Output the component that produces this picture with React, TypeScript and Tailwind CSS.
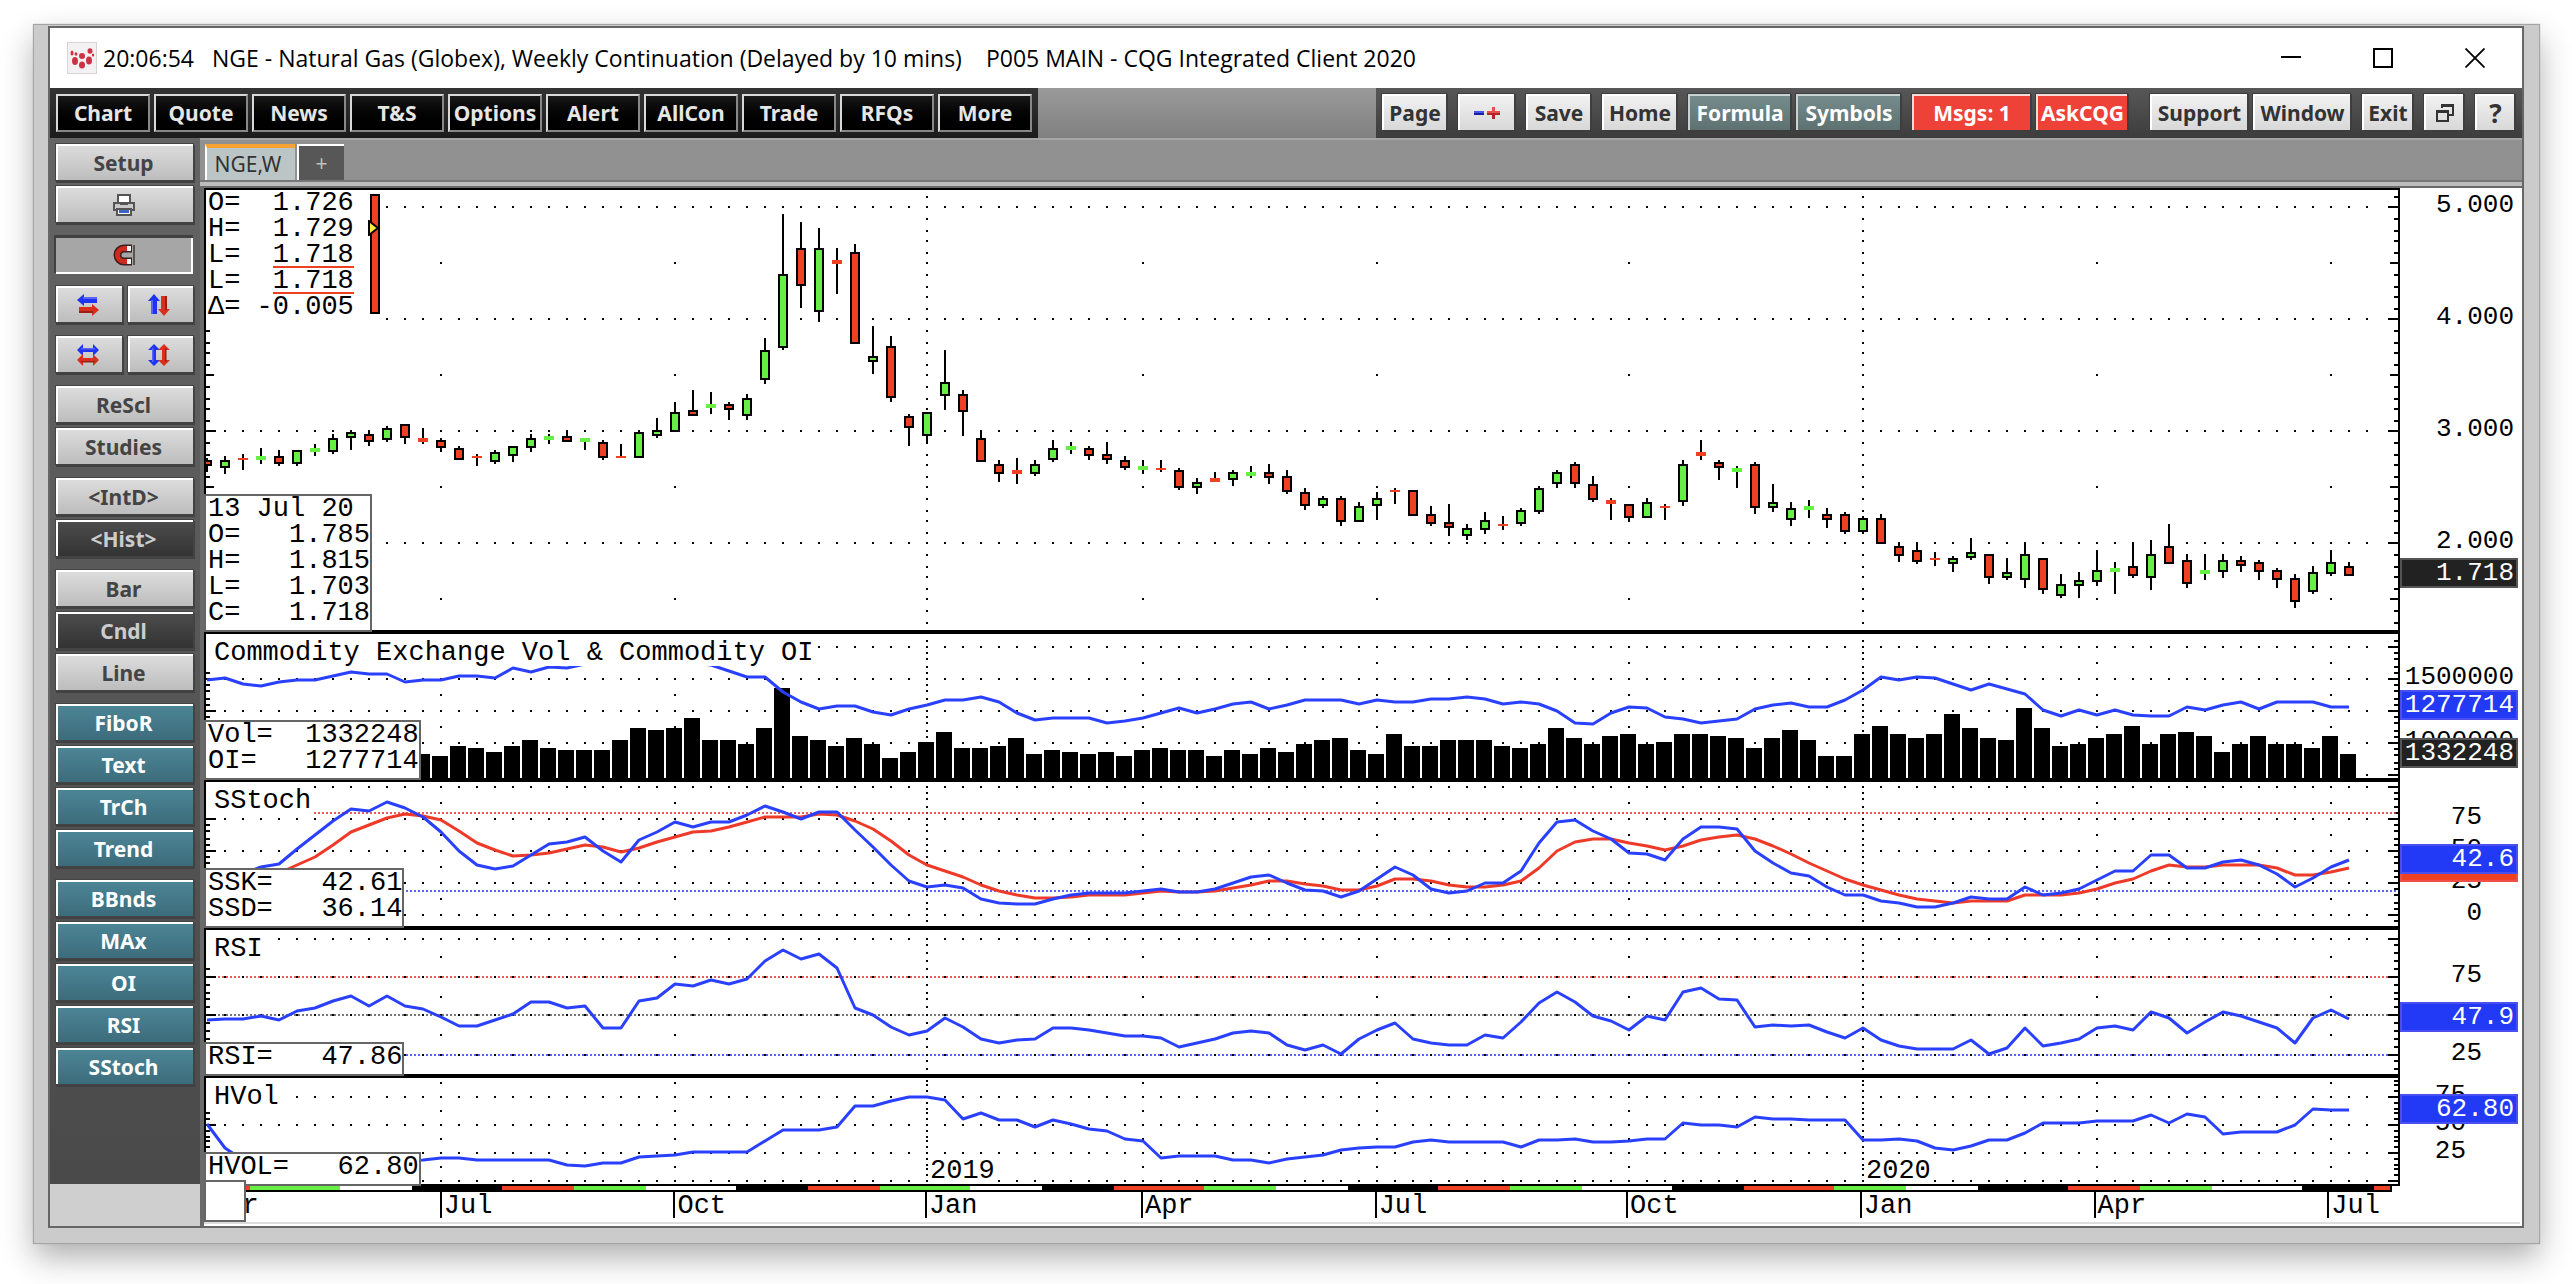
import type { ReactNode } from "react";

/* ---------- data, one entry per week ---------- */

const STEP = 18;
const FIRST = 207;
const X0 = 206;
const X1 = 2398;
const xAt = (i: number) => FIRST + STEP * i;

// high, body top, body bottom, low, direction (plot y units)
const CANDLES = `458,460,466,472,r 456,460,468,474,g 454,458,460,470,r 448,456,460,464,g 450,456,464,466,r 450,450,464,466,g
444,448,452,456,g 434,438,452,454,g 430,432,438,450,g 430,434,442,446,r 426,428,440,442,g 424,424,438,444,r
428,438,442,444,r 438,440,448,452,r 446,448,460,460,r 454,456,458,466,r 450,452,462,464,g 446,446,456,462,g
434,438,448,452,g 434,436,440,444,g 430,436,442,442,r 438,438,442,450,g 440,442,458,460,r 444,456,458,458,r
430,432,458,458,g 418,430,436,438,g 402,412,432,432,g 390,410,416,416,r 392,404,408,414,g 402,404,410,420,r
394,398,416,420,g 338,350,380,384,g 214,274,348,350,g 222,248,286,308,r 228,248,312,322,g 248,260,264,294,r
244,252,344,344,r 326,356,362,374,g 336,346,398,402,r 414,416,428,446,r 412,412,436,444,g 350,382,396,410,g
390,394,412,436,r 430,438,462,462,r 460,464,474,482,r 458,470,474,484,r 460,464,474,476,g 440,448,460,462,g
442,446,450,454,g 446,448,456,460,r 442,454,460,464,r 456,460,468,470,r 460,466,470,474,g 460,468,470,472,r
468,470,488,490,r 478,482,488,494,g 472,478,482,482,r 470,472,480,486,g 466,472,476,478,g 464,472,478,484,r
470,476,492,494,r 488,492,506,510,r 496,498,506,508,g 496,498,522,526,r 502,506,522,522,g 492,498,506,520,g
488,490,492,504,r 490,490,516,516,r 506,514,524,526,r 504,522,528,536,r 524,528,536,540,g 512,520,530,534,g
516,524,526,530,r 508,510,524,526,g 486,488,512,514,g 470,472,484,488,g 462,464,484,488,r 476,484,500,502,r
498,500,504,520,r 504,504,518,522,r 498,502,518,518,g 504,506,508,520,r 460,464,502,506,g 440,452,456,460,r
460,462,468,480,r 466,468,472,488,g 462,464,508,514,r 484,502,508,512,g 502,508,520,526,g 500,506,510,518,g
508,514,520,528,r 512,514,532,534,r 516,518,532,532,g 514,518,544,544,r 542,546,556,562,r 542,550,562,564,r
552,558,560,566,r 556,558,564,572,g 538,552,558,560,g 554,554,578,584,r 558,572,578,580,g 542,554,580,588,g
558,558,590,594,r 574,584,596,598,g 572,580,586,598,g 550,570,582,586,g 562,568,572,594,g 542,566,576,578,r
540,554,578,590,g 524,546,564,564,r 554,560,584,588,r 554,570,574,580,g 554,560,572,578,g 556,560,566,572,r
560,562,572,580,r 568,570,580,588,r 574,578,602,608,r 566,572,592,594,g 550,562,574,576,g 562,566,576,576,r`
  .split(/\s+/)
  .map((row) => {
    const [h, t, b, l, d] = row.split(",");
    return { high: +h, top: +t, bottom: +b, low: +l, up: d === "g" };
  });

const nums = (s: string) => s.trim().split(/\s+/).map(Number);

const VOLUME = nums(`756 754 752 756 754 750 752 748 752 754 750 752
754 756 746 748 752 746 740 748 750 750 750 740 728 730 728 718 740 740 744 728 688 736 740 746 738 744 758 752
742 732 748 748 746 738 754 750 752 754 752 756 750 748 750 750 756 750 754 748 752 744 740 738 750 754 734 746 746 740
740 740 746 748 744 728 738 744 736 734 744 742 734 734 736 738 748 738 730 740 756 756 734 726 734 738 734 714 728 738
740 708 728 746 744 738 734 726 744 734 732 736 752 744 736 744 744 748 736 754`);

const OPEN_INTEREST = nums(`680 678 684 686 682 680 680 676 672 674 674 682 680 680 676 676 678 668 672 667
668 664 662 660 660 661 662 663 665 671 677 677 692 702 709 706 706 712 715 709
705 700 700 697 702 713 720 718 718 718 723 721 718 713 708 713 709 704 702 709 705 700 700 700 704 700 702 702 699 699
697 699 704 702 704 711 723 724 713 707 708 717 719 723 721 719 709 705 703 707 707 700 690 677 680 677 678 684 690 684
689 694 710 716 710 715 710 715 716 716 707 710 705 702 709 702 702 702 707 707`);

const SSK = nums(`880 878 874 867 864 849 835 821 809 811 802 808 817 832 851 865 869 866 855 844 842 837 851 862 840 832 822 827 822 822
815 806 812 819 812 812 830 847 865 881 887 885 888 899 903 904 904 899 895 893 893 893 891 889 892 892 889 883 877 875
883 890 891 897 891 879 867 875 889 893 891 883 883 871 843 822 820 831 839 853 854 860 839 827 827 829 851 863 873 876
887 895 895 901 903 907 907 903 897 899 899 887 895 893 889 880 871 871 855 855 868 868 862 860 865 874 887 878 867 860`);

const SSD = nums(`884 882 880 876 873 865 857 845 832 825 818 814 816 820 831 843 850 856 855 853 849 845 847 852 848 842 837 832 831 827
822 817 817 817 814 815 821 829 841 855 865 871 877 885 891 895 898 898 897 895 895 895 893 891 892 892 891 888 885 881
881 884 886 890 890 886 879 879 881 885 887 887 885 881 868 851 842 839 839 843 846 850 846 840 837 835 839 846 854 863
871 879 885 890 895 899 901 903 901 901 901 895 895 895 893 889 883 879 871 865 867 867 865 865 865 868 875 875 872 868`);

const RSI = nums(`1020 1019 1019 1016 1020 1011 1008 1001 996 1006 996 1006 1009 1017 1026 1026 1020 1014 1002 1002 1008 1006 1028 1028 1001 998 984 986 980 984
979 961 950 959 954 968 1008 1015 1027 1035 1031 1018 1027 1039 1043 1040 1039 1028 1028 1030 1033 1036 1036 1038 1047 1043 1039 1033 1031 1033
1045 1050 1045 1054 1039 1030 1023 1039 1043 1045 1045 1035 1038 1022 1003 992 1002 1016 1021 1030 1016 1020 992 988 999 1000 1027 1025 1026 1025
1032 1038 1028 1040 1046 1049 1049 1049 1040 1054 1048 1028 1046 1043 1039 1028 1026 1030 1012 1018 1033 1022 1012 1016 1022 1028 1043 1018 1010 1019`);

const HVOL = nums(`1124 1148 1160 1164 1164 1164 1164 1163 1162 1162 1161 1161 1160 1158 1158 1160 1160 1160 1160 1160 1165 1166 1163 1163 1157 1156 1155 1152 1152 1152
1152 1141 1130 1130 1130 1127 1106 1106 1101 1097 1097 1100 1119 1113 1120 1120 1127 1120 1124 1129 1131 1139 1141 1158 1156 1156 1156 1160 1160 1163
1159 1157 1155 1150 1148 1147 1147 1142 1140 1142 1142 1142 1142 1147 1140 1140 1139 1142 1142 1141 1139 1139 1123 1125 1125 1127 1117 1119 1119 1120
1120 1120 1140 1140 1139 1141 1148 1150 1146 1140 1140 1133 1123 1123 1123 1121 1121 1121 1115 1123 1114 1117 1134 1132 1132 1132 1125 1109 1110 1110`);

const QUARTERS = [13, 26, 52, 65, 79, 105, 118];
const YEARS = [40, 92];

const MONTHS: [string, string][] = [
  ["Apr", "grow-[234] border-white"],
  ["Jul", "grow-[234] border-black"],
  ["Oct", "grow-[252] border-black"],
  ["Jan", "grow-[216] border-black"],
  ["Apr", "grow-[234] border-black"],
  ["Jul", "grow-[252] border-black"],
  ["Oct", "grow-[234] border-black"],
  ["Jan", "grow-[234] border-black"],
  ["Apr", "grow-[234] border-black"],
  ["Jul", "grow-[70] border-black"],
];

const STRIP_STOPS = [
  206, 250, 340, 412, 502, 574, 646, 736, 808, 880, 970, 1042, 1114, 1204, 1276, 1348, 1438, 1510, 1582, 1672, 1744,
  1834, 1906, 1978, 2068, 2140, 2212, 2302, 2374, 2390,
];
const STRIP_COLOURS = ["#ee4023", "#66f043", "#ffffff", "#000000"];

/* ---------- chart primitives ---------- */

type Scale = {
  top: number;
  height: number;
  grid: [y: number, fromWeek: number][];
  mids: number[];
  minor: number[];
  leftFrom: number;
};

function Grid({ s }: { s: Scale }) {
  const dots: ReactNode[] = [];
  const dot = (x: number, y: number) => dots.push(<rect key={`${x}-${y}`} x={x - 1} y={y - 1} width="2" height="2" />);
  s.grid.forEach(([y, from]) => {
    for (let i = from; i <= 120; i++) dot(xAt(i), y);
  });
  s.mids.forEach((y) => QUARTERS.forEach((q) => dot(xAt(q), y)));
  const major = s.grid.map((g) => g[0]);
  s.minor.forEach((y) => YEARS.forEach((w) => !major.includes(y) && dot(xAt(w), y)));
  return (
    <g fill="#000">
      {dots}
      {s.minor.map((y) => {
        const len = major.includes(y) ? 10 : s.mids.includes(y) && s.height > 200 ? 8 : 4;
        return (
          <g key={y}>
            <rect x={X1 - len} y={y - 1} width={len} height="2" />
            {y >= s.leftFrom && <rect x={X0} y={y - 1} width={len} height="2" />}
          </g>
        );
      })}
    </g>
  );
}

function Line({ data, colour }: { data: number[]; colour: string }) {
  return (
    <polyline
      points={data.map((y, i) => `${xAt(i)},${y}`).join(" ")}
      fill="none"
      stroke={colour}
      strokeWidth="3"
      shapeRendering="auto"
      strokeLinejoin="round"
    />
  );
}

function Level({ y, colour, from = X0 }: { y: number; colour: string; from?: number }) {
  return <line x1={from} x2={X1} y1={y} y2={y} stroke={colour} strokeWidth="2" strokeDasharray="2 2" opacity="0.8" />;
}

function Candles() {
  return (
    <g>
      {CANDLES.map((c, i) => {
        const x = xAt(i);
        const fill = c.up ? "#66f043" : "#ee4023";
        const h = c.bottom - c.top;
        return (
          <g key={i}>
            <rect x={x - 1} y={c.high} width="2" height={c.low - c.high} fill="#000" />
            {h > 4 && <rect x={x - 5} y={c.top} width="10" height={h} fill="#000" />}
            {h > 4 ? (
              <rect x={x - 3} y={c.top + 2} width="6" height={h - 4} fill={fill} />
            ) : (
              <rect x={x - 5} y={c.top} width="10" height={h} fill={fill} />
            )}
          </g>
        );
      })}
    </g>
  );
}

const ticks = (origin: number, step: number, from: number, to: number, snap: (n: number) => number) => {
  const out: number[] = [];
  for (let k = from; k <= to; k++) out.push(origin + 2 * snap((step * k) / 100));
  return out;
};

const PRICE: Scale = {
  top: 190,
  height: 440,
  grid: [[207, 10], [319, 10], [431, 1], [543, 1]],
  mids: [263, 375, 487, 599],
  minor: ticks(207, 560, -1, 37, Math.ceil),
  leftFrom: 325,
};
const VOL: Scale = {
  top: 634,
  height: 144,
  grid: [[647, 34], [679, 0], [711, 0], [743, 0], [775, 0]],
  mids: [663, 695, 727],
  minor: ticks(647, 320, -1, 20, Math.round),
  leftFrom: 672,
};
const STOCH: Scale = {
  top: 782,
  height: 144,
  grid: [[787, 6], [819, 0], [851, 0], [883, 0], [915, 0]],
  mids: [803, 835, 867, 899],
  minor: ticks(787, 320, 0, 21, Math.round),
  leftFrom: 814,
};
const RSI_SCALE: Scale = {
  top: 930,
  height: 144,
  grid: [[939, 4], [977, 0], [1015, 0], [1055, 0]],
  mids: [957, 997, 1035],
  minor: ticks(939, 387, 0, 17, Math.floor),
  leftFrom: 968,
};
const HVOL_SCALE: Scale = {
  top: 1078,
  height: 106,
  grid: [[1097, 5], [1125, 0], [1153, 0], [1181, 0]],
  mids: [1083, 1111, 1139, 1167],
  minor: ticks(1097, 280, -3, 15, Math.round),
  leftFrom: 1112,
};

/* ---------- panes ---------- */

function Pane({
  scale,
  size,
  edge,
  label,
  drawing,
  children,
  axis,
}: {
  scale: Scale;
  size: string;
  edge: string;
  label: string;
  drawing: ReactNode;
  children?: ReactNode;
  axis: ReactNode;
}) {
  return (
    <section className="flex" aria-label={label}>
      <div className={`relative min-w-0 flex-1 border-x-2 border-black ${edge}`}>
        <svg
          className={`block w-full ${size}`}
          viewBox={`${X0} ${scale.top} ${X1 - X0} ${scale.height}`}
          preserveAspectRatio="none"
          shapeRendering="crispEdges"
          aria-hidden="true"
        >
          {drawing}
        </svg>
        {children}
      </div>
      <div className="relative w-[122px] shrink-0 text-[26px]">{axis}</div>
    </section>
  );
}

function Title({ children }: { children: ReactNode }) {
  return <h2 className="absolute left-0 top-0 bg-white pl-2 pt-1.5 leading-[26px]">{children}</h2>;
}

function Readout({ rows }: { rows: string[] }) {
  return (
    <div className="absolute -bottom-0.5 -left-0.5 border-2 border-[#666] bg-white pb-1 pl-0.5 leading-[26px]">
      {rows.map((r) => (
        <p key={r} className="h-[26px] whitespace-pre">
          {r}
        </p>
      ))}
    </div>
  );
}

function AxisLabels({ labels, className, row }: { labels: string[]; className: string; row: string }) {
  return (
    <div className={`absolute inset-x-0 top-0 text-right leading-[26px] ${className}`}>
      {labels.map((l) => (
        <p key={l} className={row}>
          {l}
        </p>
      ))}
    </div>
  );
}

function Badge({ tone, at, children }: { tone: string; at: string; children?: ReactNode }) {
  return (
    <p className={`absolute left-0 right-1 h-[30px] border-2 pr-0.5 text-right leading-[26px] text-white ${tone} ${at}`}>
      {children}
    </p>
  );
}

const BLUE = "border-[#4a50f0] bg-[#2239f5]";
const DARK = "border-[#555] bg-[#222]";

/* ---------- chrome ---------- */

function Logo() {
  return (
    <svg className="h-8 w-[30px]" viewBox="0 0 30 32" aria-hidden="true">
      <rect x="0.5" y="0.5" width="29" height="31" fill="#f3f1f2" stroke="#d8d4d6" />
      <g fill="#cc3344">
        <ellipse cx="5" cy="11" rx="1.500" ry="2.500" />
        <ellipse cx="8" cy="19" rx="3" ry="4" />
        <ellipse cx="15" cy="14" rx="3" ry="3" />
        <ellipse cx="15" cy="23" rx="3" ry="3.500" />
        <ellipse cx="22" cy="18.500" rx="3" ry="4" />
        <ellipse cx="23" cy="9" rx="2.500" ry="2.800" />
        <ellipse cx="9" cy="12" rx="1.500" ry="1.800" />
        <ellipse cx="26" cy="13" rx="1.200" ry="1.600" />
      </g>
    </svg>
  );
}

const MENU = ["Chart", "Quote", "News", "T&S", "Options", "Alert", "AllCon", "Trade", "RFQs", "More"];

const LIGHT_BTN = "border-white bg-linear-to-b from-[#f1f1f1] to-[#d8d8d8] text-[#333]";
const TEAL_BTN = "border-[#c9d3d3] bg-linear-to-b from-[#768c8c] to-[#5d7171] text-white";
const RED_BTN = "border-[#f6dada] bg-[#ee4138] text-white";

const TOOLS: { label: string; content: ReactNode; look: string }[] = [
  { label: "Page", content: "Page", look: `w-[64px] mr-3 ${LIGHT_BTN}` },
  {
    label: "Zoom out or in",
    content: (
      <svg className="h-5 w-7" viewBox="0 0 28 20" aria-hidden="true">
        <path d="M1 8h10v2H1z" fill="#4a50f0" />
        <path d="M1 10h10v2H1z" fill="#1520a8" />
        <path d="M14 8h5V4h3v4h5v2H14z" fill="#e8504c" />
        <path d="M14 10h13v2h-5v4h-3v-4h-5z" fill="#b02622" />
      </svg>
    ),
    look: `w-[56px] mr-3 ${LIGHT_BTN}`,
  },
  { label: "Save", content: "Save", look: `w-[64px] mr-3 ${LIGHT_BTN}` },
  { label: "Home", content: "Home", look: `w-[74px] mr-3 ${LIGHT_BTN}` },
  { label: "Formula", content: "Formula", look: `w-[102px] mr-1.5 ${TEAL_BTN}` },
  { label: "Symbols", content: "Symbols", look: `w-[104px] mr-3 ${TEAL_BTN}` },
  { label: "Messages", content: "Msgs: 1", look: `w-[118px] mr-1.5 ${RED_BTN}` },
  { label: "AskCQG", content: "AskCQG", look: `w-[91px] mr-[23px] ${RED_BTN}` },
  { label: "Support", content: "Support", look: `w-[97px] mr-1.5 ${LIGHT_BTN}` },
  { label: "Window", content: "Window", look: `w-[97px] mr-3 ${LIGHT_BTN}` },
  { label: "Exit", content: "Exit", look: `w-[50px] mr-3 ${LIGHT_BTN}` },
  {
    label: "Restore window",
    content: (
      <svg className="h-5 w-5" viewBox="0 0 20 20" fill="none" stroke="#333" aria-hidden="true">
        <path d="M7 5V2h11v10h-4" strokeWidth="2" />
        <path d="M6 2.500h13" strokeWidth="3" />
        <path d="M2 8h11v10H2z" strokeWidth="2" />
        <path d="M1 8.500h13" strokeWidth="3" />
      </svg>
    ),
    look: `w-[39px] mr-3 ${LIGHT_BTN}`,
  },
  { label: "Help", content: <span className="text-[26px]">?</span>, look: `w-[39px] mr-2 ${LIGHT_BTN}` },
];

function SwapIcon({ vertical, both }: { vertical?: boolean; both?: boolean }) {
  return (
    <svg className="h-[22px] w-[22px]" viewBox="0 0 22 22" aria-hidden="true">
      <g transform={vertical ? "matrix(0 1 1 0 0 0)" : undefined}>
        <path d={both ? "M0 6l6-6v4h10V0l6 6-6 6V8H6v4z" : "M0 6l7-6v3h13v6H7v3z"} fill="#1d35f2" />
        <path d={both ? "M0 16l6-6v4h10v-4l6 6-6 6v-4H6v4z" : "M22 16l-7-6v3H2v6h13v3z"} fill="#d92f1c" />
        <path d={both ? "M4 4h14v1.500H4z" : "M6 3h14v2H6z"} fill="#5a62fa" />
        <path d={both ? "M4 17h14v1.500H4z" : "M2 17h14v2H2z"} fill="#9c2012" />
      </g>
    </svg>
  );
}

const PrinterIcon = (
  <svg className="h-[22px] w-[24px]" viewBox="0 0 24 22" aria-hidden="true">
    <path d="M6 1h12v8H6z" fill="#fff" stroke="#555" strokeWidth="2" />
    <path d="M2 9h20v7H2z" fill="#c9c9c9" stroke="#555" strokeWidth="2" />
    <path d="M8 10h8" stroke="#555" strokeWidth="2" />
    <path d="M5 15h14v6H5z" fill="#f4f6fb" stroke="#555" strokeWidth="2" />
    <path d="M7 16h10v3H7z" fill="#3d63c4" />
  </svg>
);

const MagnetIcon = (
  <svg className="h-[22px] w-[24px]" viewBox="0 0 24 22" fill="none" aria-hidden="true">
    <path d="M20 4.500h-8a6.500 6.500 0 0 0 0 13h8" stroke="#3a2020" strokeWidth="8" />
    <path d="M15 4.500h-3a6.500 6.500 0 0 0 0 13h3" stroke="#d2291f" strokeWidth="5" />
    <path d="M15 4.500h4M15 17.500h4" stroke="#f4f4f4" strokeWidth="5" />
    <path d="M22 1v20" stroke="#555" strokeWidth="2" />
  </svg>
);

const S_LIGHT = "border-white bg-linear-to-b from-[#dcdcdc] to-[#bdbdbd] text-[#444]";
const S_DARK = "border-white bg-linear-to-b from-[#4c4c4c] to-[#333] text-[#ccc]";
const S_TEAL = "border-white bg-linear-to-b from-[#4c8596] to-[#3c6c7b] text-white";

function SideButton({ look = S_LIGHT, label, children }: { look?: string; label?: string; children: ReactNode }) {
  return (
    <button
      type="button"
      aria-label={label}
      className={`flex h-9 w-full items-center justify-center border-l-2 border-t-2 pr-1 shadow-[0_0_0_1px_#444,1px_2px_0_1px_#414141] ${look}`}
    >
      {children}
    </button>
  );
}

const GROUPS: { look: string; labels: string[] }[] = [
  { look: S_LIGHT, labels: ["ReScl", "Studies"] },
  { look: S_LIGHT, labels: ["<IntD>", "<Hist>"] },
  { look: S_LIGHT, labels: ["Bar", "Cndl", "Line"] },
  { look: S_TEAL, labels: ["FiboR", "Text", "TrCh", "Trend"] },
  { look: S_TEAL, labels: ["BBnds", "MAx", "OI", "RSI", "SStoch"] },
];
const PRESSED = ["<Hist>", "Cndl"];

function Sidebar() {
  return (
    <aside className="flex w-[150px] shrink-0 flex-col bg-[#cfcfcf]">
      <nav className="flex flex-1 flex-col gap-3.5 bg-linear-to-b from-[#646464] to-[#4a4a4a] py-1.5 pl-1.5 pr-[7px] font-bold">
        <div className="flex flex-col gap-1.5">
          <SideButton>Setup</SideButton>
          <SideButton label="Print">{PrinterIcon}</SideButton>
        </div>
        <button
          type="button"
          aria-label="Magnet"
          aria-pressed="true"
          className="-mb-0.5 mt-0.5 flex h-9 w-full items-center justify-center border-b-2 border-r-2 border-white bg-[#a6a6a6] shadow-[-1px_-2px_0_1px_#414141]"
        >
          {MagnetIcon}
        </button>
        <div className="grid grid-cols-2 gap-x-1.5 gap-y-3.5">
          <SideButton label="Shift horizontally">
            <SwapIcon />
          </SideButton>
          <SideButton label="Shift vertically">
            <SwapIcon vertical />
          </SideButton>
          <SideButton label="Stretch horizontally">
            <SwapIcon both />
          </SideButton>
          <SideButton label="Stretch vertically">
            <SwapIcon both vertical />
          </SideButton>
        </div>
        {GROUPS.map((g) => (
          <div key={g.labels[0]} className="flex flex-col gap-1.5">
            {g.labels.map((l) => (
              <SideButton key={l} look={PRESSED.includes(l) ? S_DARK : g.look}>
                {l}
              </SideButton>
            ))}
          </div>
        ))}
      </nav>
      <div className="h-[42px]" />
    </aside>
  );
}

function Charts() {
  return (
    <div className="relative border-l-4 border-[#6a6a6a] bg-white font-['Liberation_Mono',monospace] text-[27px] text-black">
      <div className="mr-[122px] h-0.5 bg-black" />

      <Pane
        label="Price"
        scale={PRICE}
        size="h-[440px]"
        edge="border-b-4"
        drawing={
          <>
            <Grid s={PRICE} />
            <Candles />
          </>
        }
        axis={
          <>
            <AxisLabels labels={["5.000", "4.000", "3.000", "2.000"]} className="pr-2 pt-0.5" row="h-[112px]" />
            <Badge tone={DARK} at="top-[368px]">
              1.718
            </Badge>
          </>
        }
      >
        <div className="absolute left-0 top-0 flex h-[130px] gap-4 bg-white pl-0.5 leading-[26px]">
          <div className="whitespace-pre">
            <p className="h-[26px]">O=  1.726</p>
            <p className="h-[26px]">H=  1.729</p>
            <p className="flex h-[26px]">
              L=  <span className="border-b-2 border-[#ee4023]">1.718</span>
            </p>
            <p className="flex h-[26px]">
              L=  <span className="border-b-2 border-[#ee4023]">1.718</span>
            </p>
            <p className="h-[26px]">Δ= -0.005</p>
          </div>
          <div className="relative mt-1 h-[120px] w-2.5 border-2 border-black bg-[#ee4023]">
            <svg className="absolute -left-1 top-6 h-4 w-3" viewBox="0 0 12 16" aria-hidden="true">
              <path d="M1 1l9 7-9 7z" fill="#f7f13c" stroke="#000" strokeWidth="2" />
            </svg>
          </div>
        </div>
        <Readout rows={["13 Jul 20", "O=   1.785", "H=   1.815", "L=   1.703", "C=   1.718"]} />
      </Pane>

      <Pane
        label="Volume and open interest"
        scale={VOL}
        size="h-[144px]"
        edge="border-b-4"
        drawing={
          <>
            <Grid s={VOL} />
            {VOLUME.map((y, i) => (
              <rect key={i} x={xAt(i) - 9} y={y} width="16" height={778 - y} />
            ))}
            <Line data={OPEN_INTEREST} colour="#2a40ff" />
          </>
        }
        axis={
          <>
            <AxisLabels labels={["1500000", "1000000"]} className="pr-2 pt-[30px]" row="h-[64px]" />
            <Badge tone={BLUE} at="top-[56px]">
              1277714
            </Badge>
            <Badge tone={DARK} at="top-[104px]">
              1332248
            </Badge>
          </>
        }
      >
        <Title>Commodity Exchange Vol &amp; Commodity OI</Title>
        <Readout rows={["Vol=  1332248", "OI=   1277714"]} />
      </Pane>

      <Pane
        label="Slow stochastic"
        scale={STOCH}
        size="h-[144px]"
        edge="border-b-4"
        drawing={
          <>
            <Grid s={STOCH} />
            <Level y={813} colour="#e8322a" from={314} />
            <Level y={891} colour="#2a40ff" />
            <Line data={SSD} colour="#ee3a28" />
            <Line data={SSK} colour="#2a40ff" />
          </>
        }
        axis={
          <>
            <AxisLabels labels={["75", "50", "25", "0"]} className="pr-10 pt-[22px]" row="h-8" />
            <Badge tone="border-[#ee5048] bg-[#ee4023]" at="top-[70px]" />
            <Badge tone={BLUE} at="top-[62px]">
              42.6
            </Badge>
          </>
        }
      >
        <Title>SStoch</Title>
        <Readout rows={["SSK=   42.61", "SSD=   36.14"]} />
      </Pane>

      <Pane
        label="Relative strength index"
        scale={RSI_SCALE}
        size="h-[144px]"
        edge="border-b-4"
        drawing={
          <>
            <Level y={977} colour="#e8322a" />
            <Level y={1015} colour="#555" />
            <Level y={1055} colour="#2a40ff" />
            <Grid s={RSI_SCALE} />
            <Line data={RSI} colour="#2a40ff" />
          </>
        }
        axis={
          <>
            <AxisLabels labels={["75", "25"]} className="pr-10 pt-8" row="h-[78px]" />
            <Badge tone={BLUE} at="top-[72px]">
              47.9
            </Badge>
          </>
        }
      >
        <Title>RSI</Title>
        <Readout rows={["RSI=   47.86"]} />
      </Pane>

      <Pane
        label="Historical volatility"
        scale={HVOL_SCALE}
        size="h-[106px]"
        edge="border-b-2"
        drawing={
          <>
            <Grid s={HVOL_SCALE} />
            <Line data={HVOL} colour="#2a40ff" />
          </>
        }
        axis={
          <>
            <AxisLabels labels={["75", "50", "25"]} className="pr-14 pt-1" row="h-7" />
            <Badge tone={BLUE} at="top-4">
              62.80
            </Badge>
          </>
        }
      >
        <Title>HVol</Title>
        <Readout rows={["HVOL=   62.80"]} />
        <div className="absolute inset-x-0 bottom-0 flex leading-[26px]">
          <div className="grow-[720] basis-0" />
          <div className="grow-[936] basis-0">
            <p className="ml-1 w-fit bg-white">2019</p>
          </div>
          <div className="grow-[536] basis-0">
            <p className="ml-1 w-fit bg-white">2020</p>
          </div>
        </div>
      </Pane>

      <div className="mr-[130px] h-1.5 border-b-2 border-r-2 border-black">
        <svg className="block h-1 w-full" viewBox="204 0 2186 4" preserveAspectRatio="none" shapeRendering="crispEdges" aria-hidden="true">
          {STRIP_STOPS.slice(1).map((x, i) => (
            <rect key={x} x={STRIP_STOPS[i]} width={x - STRIP_STOPS[i]} height="4" fill={STRIP_COLOURS[i % 4]} />
          ))}
        </svg>
      </div>

      <div className="mr-[122px] flex h-[30px] pl-0.5 leading-[28px]">
        {MONTHS.map(([m, look], i) => (
          <p key={i} className={`h-[26px] basis-0 border-l-2 pl-0.5 ${look}`}>
            {m}
          </p>
        ))}
      </div>
      <div className="absolute bottom-1 left-0 h-[42px] w-[42px] border-2 border-[#666] bg-white" />
      <div className="mr-0.5 h-1 border-t-2 border-[#ddd]" />
    </div>
  );
}

export default function App() {
  return (
    <div className="min-h-screen bg-white pb-10 pl-[34px] pr-[33px] pt-[25px] font-['Noto_Sans',sans-serif] text-[21px] leading-6">
      <div className="border-b-[15px] border-l-[14px] border-r-[15px] border-t border-[#cbcbcb] shadow-[0_0_1px_1px_#a5a5a5,0_14px_30px_rgba(0,0,0,0.32)]">
        <main className="border-2 border-[#666] bg-white">
          <header className="flex h-[60px] items-center pl-[17px] pr-[37px] font-['Open_Sans',sans-serif] text-[23px] text-black">
            <Logo />
            <span className="ml-1.5 w-[109px]">20:06:54</span>
            <h1 className="flex flex-1 gap-6">
              <span>NGE - Natural Gas (Globex), Weekly Continuation (Delayed by 10 mins)</span>
              <span>P005 MAIN - CQG Integrated Client 2020</span>
            </h1>
            <div className="flex gap-[72px]">
              <button type="button" aria-label="Minimize">
                <svg className="block h-5 w-5" viewBox="0 0 20 20" aria-hidden="true">
                  <path d="M0 8h20v2H0z" />
                </svg>
              </button>
              <button type="button" aria-label="Maximize">
                <svg className="block h-5 w-5" viewBox="0 0 20 20" fill="none" stroke="#000" strokeWidth="2" aria-hidden="true">
                  <path d="M1 1h18v18H1z" />
                </svg>
              </button>
              <button type="button" aria-label="Close">
                <svg className="block h-5 w-5" viewBox="0 0 20 20" stroke="#000" strokeWidth="1.800" aria-hidden="true">
                  <path d="M0.500 0.500l19 19M19.500 0.500l-19 19" />
                </svg>
              </button>
            </div>
          </header>

          <div className="flex h-[50px] bg-linear-to-b from-[#9a9a9a] to-[#808080] font-bold">
            <nav className="flex gap-1 bg-linear-to-b from-[#333] to-[#1c1c1c] p-1.5">
              {MENU.map((m) => (
                <button
                  key={m}
                  type="button"
                  className="h-[38px] w-[94px] whitespace-nowrap border-2 border-b-[#888] border-l-[#d8d8d8] border-r-[#888] border-t-[#d8d8d8] bg-linear-to-b from-[#191919] to-black text-center text-[#e6e6e6]"
                >
                  {m}
                </button>
              ))}
            </nav>
            <div className="flex-1" />
            <div className="flex bg-linear-to-b from-[#575757] to-[#3d3d3d] py-1.5 pl-1.5">
              {TOOLS.map((t) => (
                <button
                  key={t.label}
                  type="button"
                  aria-label={t.label}
                  className={`flex h-9 shrink-0 items-center justify-center whitespace-nowrap border-l-2 border-t-2 shadow-[0_0_0_1px_#3e3e3e,1px_1px_0_1px_#3e3e3e] ${t.look}`}
                >
                  {t.content}
                </button>
              ))}
            </div>
          </div>

          <div className="flex">
            <Sidebar />
            <div className="min-w-0 flex-1">
              <div className="flex h-[42px] items-end gap-0.5 border-t-2 border-[#a5a5a5] bg-[#919191] pl-[5px]">
                <button type="button" className="h-9 w-[90px] border-l-2 border-t-4 border-l-white border-t-[#f7a233] bg-[#bcc5c5] pr-1.5 text-[#333]">
                  NGE,W
                </button>
                <button type="button" aria-label="Add page" className="h-9 w-[47px] border-l-2 border-t-2 border-white bg-[#575757] text-[#b8c4b8]">
                  +
                </button>
              </div>
              <div className="h-2 border-b-2 border-t-2 border-b-[#6a6a6a] border-t-[#777] bg-[#bdbdbd]" />
              <Charts />
            </div>
          </div>
        </main>
      </div>
    </div>
  );
}
